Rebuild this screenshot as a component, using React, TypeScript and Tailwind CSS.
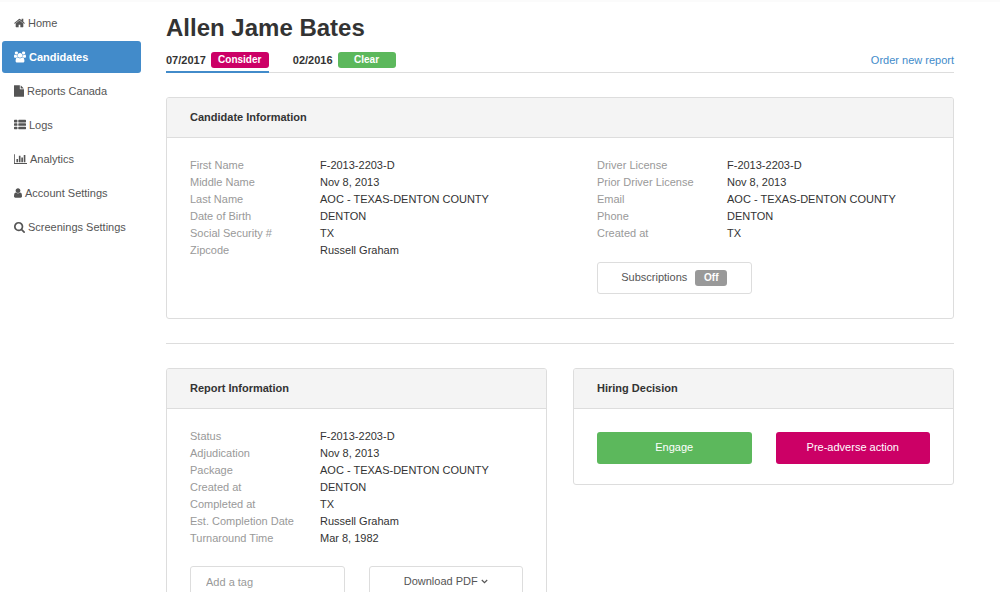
import type { ReactNode } from "react";

type IconProps = { viewBox: string; d: string; className: string };

function Icon({ viewBox, d, className }: IconProps) {
  return (
    <svg viewBox={viewBox} className={`shrink-0 fill-current ${className}`} aria-hidden="true">
      <path d={d} />
    </svg>
  );
}

type NavItem = { label: string; active?: boolean; icon: IconProps };

const navItems: NavItem[] = [
  {
    label: "Home",
    icon: {
      viewBox: "64 0 1664 1792",
      className: "h-3 w-[11px]",
      d: "M1472 992v480q0 26-19 45t-45 19h-384v-384h-256v384h-384q-26 0-45-19t-19-45v-480q0-1 .5-3t.5-3l575-474 575 474q1 2 1 6zm223-69l-62 74q-8 9-21 11h-3q-13 0-21-7l-692-577-692 577q-12 8-24 7-13-2-21-11l-62-74q-8-10-7-23.5t11-21.5l719-599q32-26 76-26t76 26l244 204v-195q0-14 9-23t23-9h192q14 0 23 9t9 23v408l219 182q10 8 11 21.5t-7 23.5z",
    },
  },
  {
    label: "Candidates",
    active: true,
    icon: {
      viewBox: "0 0 1920 1792",
      className: "h-3 w-3",
      d: "M593 896q-162 5-265 128h-134q-82 0-138-40.5t-56-118.5q0-353 124-353 6 0 43.5 21t97.5 42.5 119 21.5q67 0 133-23-5 37-5 66 0 139 81 256zm1071 637q0 120-73 189.5t-194 69.5h-874q-121 0-194-69.5t-73-189.5q0-53 3.5-103.5t14-109 26.5-108.5 43-97.5 62-81 85.5-53.5 111.5-20q10 0 43 21.5t73 48 107 48 135 21.5 135-21.5 107-48 73-48 43-21.5q61 0 111.5 20t85.5 53.5 62 81 43 97.5 26.5 108.5 14 109 3.5 103.5zm-1024-1277q0 106-75 181t-181 75-181-75-75-181 75-181 181-75 181 75 75 181zm704 384q0 159-112.5 271.5t-271.5 112.5-271.5-112.5-112.5-271.5 112.5-271.5 271.5-112.5 271.5 112.5 112.5 271.5zm576 225q0 78-56 118.5t-138 40.5h-134q-103-123-265-128 81-117 81-256 0-29-5-66 66 23 133 23 59 0 119-21.5t97.5-42.5 43.5-21q124 0 124 353zm-128-609q0 106-75 181t-181 75-181-75-75-181 75-181 181-75 181 75 75 181z",
    },
  },
  {
    label: "Reports Canada",
    icon: {
      viewBox: "128 0 1536 1792",
      className: "h-3 w-2.5",
      d: "M1152 512v-472q22 14 36 28l408 408q14 14 28 36h-472zm-128 32q0 40 28 68t68 28h544v1056q0 40-28 68t-68 28h-1344q-40 0-68-28t-28-68v-1600q0-40 28-68t68-28h800v544z",
    },
  },
  {
    label: "Logs",
    icon: {
      viewBox: "0 0 1792 1792",
      className: "h-3 w-3",
      d: "M512 1248v192q0 40-28 68t-68 28h-320q-40 0-68-28t-28-68v-192q0-40 28-68t68-28h320q40 0 68 28t28 68zm0-512v192q0 40-28 68t-68 28h-320q-40 0-68-28t-28-68v-192q0-40 28-68t68-28h320q40 0 68 28t28 68zm1280 512v192q0 40-28 68t-68 28h-960q-40 0-68-28t-28-68v-192q0-40 28-68t68-28h960q40 0 68 28t28 68zm-1280-1024v192q0 40-28 68t-68 28h-320q-40 0-68-28t-28-68v-192q0-40 28-68t68-28h320q40 0 68 28t28 68zm1280 512v192q0 40-28 68t-68 28h-960q-40 0-68-28t-28-68v-192q0-40 28-68t68-28h960q40 0 68 28t28 68zm0-512v192q0 40-28 68t-68 28h-960q-40 0-68-28t-28-68v-192q0-40 28-68t68-28h960q40 0 68 28t28 68z",
    },
  },
  {
    label: "Analytics",
    icon: {
      viewBox: "0 0 2048 1792",
      className: "h-3 w-[13px]",
      d: "M640 896v512h-256v-512h256zm384-512v1024h-256v-1024h256zm1024 1152v128h-2048v-1536h128v1408h1920zm-640-896v768h-256v-768h256zm384-384v1152h-256v-1152h256z",
    },
  },
  {
    label: "Account Settings",
    icon: {
      viewBox: "256 0 1280 1792",
      className: "h-3 w-2",
      d: "M1536 1399q0 109-62.5 187t-150.5 78h-854q-88 0-150.5-78t-62.5-187q0-85 8.5-160.5t31.5-152 58.5-131 94-89 134.5-34.5q131 128 313 128t313-128q76 0 134.5 34.5t94 89 58.5 131 31.5 152 8.5 160.5zm-256-887q0 159-112.5 271.5t-271.5 112.5-271.5-112.5-112.5-271.5 112.5-271.5 271.5-112.5 271.5 112.5 112.5 271.5z",
    },
  },
  {
    label: "Screenings Settings",
    icon: {
      viewBox: "64 0 1664 1792",
      className: "h-3 w-[11px]",
      d: "M1216 832q0-185-131.5-316.5t-316.5-131.5-316.5 131.5-131.5 316.5 131.5 316.5 316.5 131.5 316.5-131.5 131.5-316.5zm512 832q0 52-38 90t-90 38q-54 0-90-38l-343-342q-179 124-399 124-143 0-273.5-55.5t-225-150-150-225-55.5-273.5 55.5-273.5 150-225 225-150 273.5-55.5 273.5 55.5 225 150 150 225 55.5 273.5q0 220-124 399l343 343q37 37 37 90z",
    },
  },
];

type Field = [label: string, value: string];

const personalFields: Field[] = [
  ["First Name", "F-2013-2203-D"],
  ["Middle Name", "Nov 8, 2013"],
  ["Last Name", "AOC - TEXAS-DENTON COUNTY"],
  ["Date of Birth", "DENTON"],
  ["Social Security #", "TX"],
  ["Zipcode", "Russell Graham"],
];

const contactFields: Field[] = [
  ["Driver License", "F-2013-2203-D"],
  ["Prior Driver License", "Nov 8, 2013"],
  ["Email", "AOC - TEXAS-DENTON COUNTY"],
  ["Phone", "DENTON"],
  ["Created at", "TX"],
];

const reportFields: Field[] = [
  ["Status", "F-2013-2203-D"],
  ["Adjudication", "Nov 8, 2013"],
  ["Package", "AOC - TEXAS-DENTON COUNTY"],
  ["Created at", "DENTON"],
  ["Completed at", "TX"],
  ["Est. Completion Date", "Russell Graham"],
  ["Turnaround Time", "Mar 8, 1982"],
];

function FieldList({ fields }: { fields: Field[] }) {
  return (
    <dl className="leading-[17px]">
      {fields.map(([label, value]) => (
        <div key={label} className="flex">
          <dt className="w-[130px] shrink-0 text-[#999]">{label}</dt>
          <dd className="whitespace-nowrap text-[#333]">{value}</dd>
        </div>
      ))}
    </dl>
  );
}

function Panel({ title, children }: { title: string; children: ReactNode }) {
  return (
    <section className="overflow-hidden rounded-[3px] border border-[#ddd] bg-white">
      <h2 className="border-b border-[#ddd] bg-[#f4f4f4] px-[23px] text-[11px] leading-[39px] font-bold text-[#333]">
        {title}
      </h2>
      {children}
    </section>
  );
}

function Tab({ date, status, color, active }: { date: string; status: string; color: string; active?: boolean }) {
  return (
    <button
      type="button"
      role="tab"
      aria-selected={!!active}
      className={`-mb-px flex items-center gap-[5px] border-b-2 pb-0.5 font-bold text-[#333] ${
        active ? "border-[#428bca]" : "border-transparent"
      }`}
    >
      {date}
      <span className={`w-[58px] rounded-[3px] text-[10px] leading-4 text-white ${color}`}>{status}</span>
    </button>
  );
}

export default function App() {
  return (
    <div className="flex min-h-screen items-start border-t-2 border-[#fbfbfb] bg-white font-['Liberation_Sans',Arial,sans-serif] text-[11px] text-[#555]">
      <nav className="ml-0.5 flex w-[139px] shrink-0 flex-col gap-0.5 pt-[5px]">
        {navItems.map(({ label, active, icon }) => (
          <a
            key={label}
            href="#"
            aria-current={active ? "page" : undefined}
            className={`flex h-8 items-center gap-[3px] rounded-[3px] px-3 whitespace-nowrap ${
              active ? "bg-[#428bca] font-bold text-white" : "text-[#555]"
            }`}
          >
            <Icon {...icon} />
            {label}
          </a>
        ))}
      </nav>

      <main className="mr-[46px] ml-[25px] min-w-0 flex-1 pt-2.5 pb-6">
        <h1 className="text-2xl leading-8 font-bold text-[#333]">Allen Jame Bates</h1>

        <div className="mt-2 flex items-start justify-between border-b border-[#ddd]">
          <div role="tablist" className="flex gap-6">
            <Tab date="07/2017" status="Consider" color="bg-[#cc0066]" active />
            <Tab date="02/2016" status="Clear" color="bg-[#5cb85c]" />
          </div>
          <a href="#" className="leading-4 text-[#428bca]">
            Order new report
          </a>
        </div>

        <div className="mt-6">
          <Panel title="Candidate Information">
            <div className="grid grid-cols-2 gap-x-[74px] px-[23px] pt-[19px] pb-6">
              <FieldList fields={personalFields} />
              <div>
                <FieldList fields={contactFields} />
                <div className="mt-5 grid grid-cols-2 gap-x-6">
                  <button
                    type="button"
                    className="flex h-8 items-center justify-center gap-2 rounded-[3px] border border-[#ddd] text-[#555]"
                  >
                    Subscriptions
                    <span className="w-8 rounded-[3px] bg-[#999] text-[10px] leading-4 font-bold text-white">Off</span>
                  </button>
                </div>
              </div>
            </div>
          </Panel>
        </div>

        <hr className="my-6 border-[#ddd]" />

        <div className="grid grid-cols-2 items-start gap-[26px]">
          <Panel title="Report Information">
            <div className="px-[23px] pt-[19px] pb-6">
              <FieldList fields={reportFields} />
              <div className="mt-[19px] grid grid-cols-2 gap-x-6">
                <input
                  type="text"
                  aria-label="Add a tag"
                  placeholder="Add a tag"
                  className="h-8 w-full min-w-0 rounded-[3px] border border-[#ddd] px-[15px] text-[#333] placeholder:text-[#999]"
                />
                <button
                  type="button"
                  aria-haspopup="menu"
                  className="flex h-8 items-center justify-center gap-[3px] rounded-[3px] border border-[#ddd] text-[#555]"
                >
                  Download PDF
                  <svg viewBox="0 0 7 5" className="h-[5px] w-[7px] fill-none stroke-current" aria-hidden="true">
                    <path d="M.8 1l2.7 2.6L6.2 1" strokeWidth="1.2" />
                  </svg>
                </button>
              </div>
            </div>
          </Panel>

          <Panel title="Hiring Decision">
            <div className="grid grid-cols-2 gap-x-6 px-[23px] pt-[23px] pb-5">
              <button type="button" className="h-8 rounded-[3px] bg-[#5cb85c] text-white">
                Engage
              </button>
              <button type="button" className="h-8 rounded-[3px] bg-[#cc0066] text-white">
                Pre-adverse action
              </button>
            </div>
          </Panel>
        </div>
      </main>
    </div>
  );
}
